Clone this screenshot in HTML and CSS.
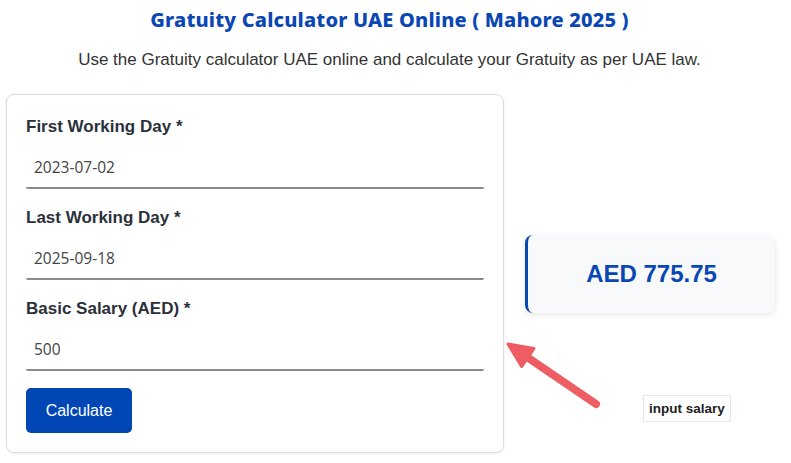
FILE: index.html
```html
<!DOCTYPE html>
<html lang="en">
<head>
    <meta charset="UTF-8">
    <meta name="viewport" content="width=device-width, initial-scale=1.0">
    <title>Gratuity Calculator UAE Online</title>
    <link rel="stylesheet" href="styles.css">
</head>
<body>
    <header class="header">
        <h1 class="title">Gratuity Calculator UAE Online ( Mahore 2025 )</h1>
        <p class="subtitle">Use the Gratuity calculator UAE online and calculate your Gratuity as per UAE law.</p>
    </header>

    <main class="calculator">
        <form class="calc-card" onsubmit="return false;">
            <div class="field">
                <label class="field-label" for="first-day">First Working Day *</label>
                <input class="field-input" id="first-day" type="text" value="2023-07-02">
            </div>

            <div class="field">
                <label class="field-label" for="last-day">Last Working Day *</label>
                <input class="field-input" id="last-day" type="text" value="2025-09-18">
            </div>

            <div class="field">
                <label class="field-label" for="salary">Basic Salary (AED) *</label>
                <input class="field-input" id="salary" type="text" value="500">
            </div>

            <button class="calc-button" type="submit">Calculate</button>
        </form>

        <div class="result">
            <div class="result-amount">AED 775.75</div>
        </div>
    </main>

    <!-- annotation over the screenshot -->
    <svg class="pointer-arrow" width="104" height="76" viewBox="0 0 104 76">
        <line x1="24" y1="19" x2="96" y2="68" stroke="#ee5d63" stroke-width="8" stroke-linecap="round"/>
        <polygon points="8,8 34,12.4 21.6,30.6" fill="#ee5d63" stroke="#ee5d63" stroke-width="3" stroke-linejoin="round"/>
    </svg>
    <span class="note">input salary</span>
</body>
</html>
```

FILE: styles.css
```css
* {
    margin: 0;
    padding: 0;
    box-sizing: border-box;
}

body {
    font-family: 'Liberation Sans', Arial, sans-serif;
    background: #fff;
    color: #333;
    width: 791px;
    height: 463px;
    overflow: hidden;
}

.header {
    width: 779px;
    text-align: center;
}

.title {
    font-family: 'Noto Sans', sans-serif;
    font-size: 20px;
    font-weight: 800;
    line-height: 24px;
    letter-spacing: 0.18px;
    color: #0a47b3;
    margin-top: 8px;
}

.subtitle {
    font-size: 17px;
    line-height: 20px;
    color: #333;
    margin-top: 18px;
}

.calculator {
    display: flex;
    align-items: center;
    gap: 21px;
    padding-left: 6px;
    margin-top: 24px;
}

.calc-card {
    width: 498px;
    padding: 22px 19px 19px;
    border: 1px solid #dcdcdc;
    border-radius: 8px;
    box-shadow: 0 1px 4px rgba(0, 0, 0, 0.06);
    background: #fff;
}

.field {
    margin-bottom: 19px;
}

.field-label {
    display: block;
    font-size: 17px;
    font-weight: 700;
    line-height: 20px;
    color: #2b313b;
    margin-bottom: 10px;
}

.field-input {
    display: block;
    width: 100%;
    height: 42px;
    padding: 0 8px;
    border: none;
    border-bottom: 2px solid #8a8a8a;
    border-radius: 0 0 2px 2px;
    font-family: 'Open Sans', sans-serif;
    font-size: 15.5px;
    color: #444;
    background: transparent;
    outline: none;
}

.calc-button {
    display: block;
    width: 106px;
    height: 45px;
    margin-top: -2px;
    border: none;
    border-radius: 5px;
    background: #0047b5;
    color: #fff;
    font-family: 'Liberation Sans', Arial, sans-serif;
    font-size: 16px;
    cursor: pointer;
}

.result {
    width: 250px;
    height: 78px;
    display: flex;
    align-items: center;
    justify-content: center;
    background: #f8f9fa;
    border-left: 3px solid #0a47b3;
    border-radius: 8px;
    box-shadow: 0 2px 6px rgba(0, 0, 0, 0.1);
}

.result-amount {
    font-size: 24px;
    font-weight: 700;
    color: #0a47b3;
}

.pointer-arrow {
    position: absolute;
    left: 500px;
    top: 336px;
}

.note {
    position: absolute;
    left: 643px;
    top: 395px;
    width: 88px;
    height: 27px;
    display: flex;
    align-items: center;
    justify-content: center;
    border: 1px solid #dfe7f1;
    font-size: 13.5px;
    font-weight: 700;
    color: #222;
    background: #fff;
}
```
